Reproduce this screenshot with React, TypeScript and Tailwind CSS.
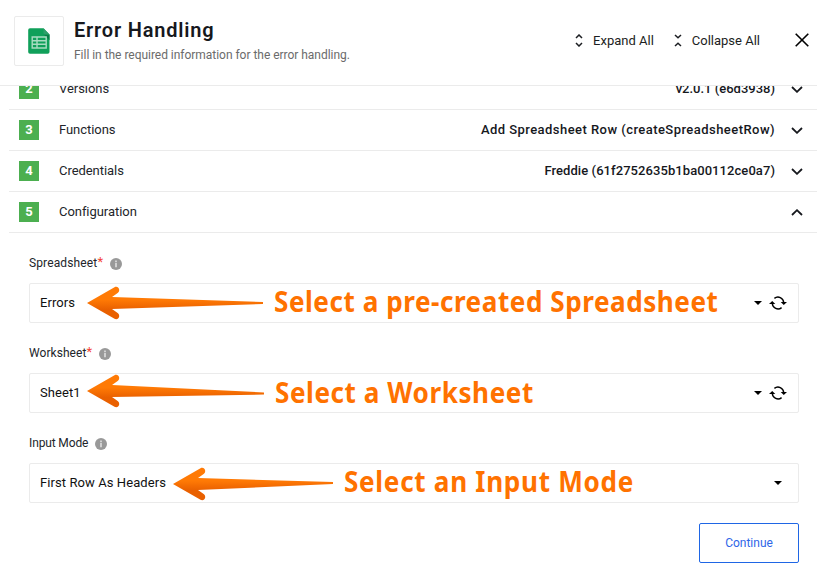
import type { ReactNode } from 'react';

const Chevron = ({ up = false }: { up?: boolean }) => (
  <svg className="h-[7px] w-3" viewBox="0 0 12 7" fill="none" stroke="#16181d" strokeWidth="1.8">
    <path d={up ? 'M1 6l5-4.8L11 6' : 'M1 1l5 4.8L11 1'} />
  </svg>
);

const UpDown = ({ collapse = false }: { collapse?: boolean }) => (
  <svg className="-mt-px h-[13px] w-2" viewBox="0 0 8 13" fill="none" stroke="#1c1e22" strokeWidth="1.5">
    <path d={collapse ? 'M1 1l3 2.8L7 1M1 12l3-2.8L7 12' : 'M1 4l3-3 3 3M1 9l3 3 3-3'} />
  </svg>
);

const Info = () => (
  <svg className="h-3 w-3" viewBox="0 0 12 12">
    <circle cx="6" cy="6" r="6" fill="#999" />
    <path d="M5.3 2.6h1.4v1.3H5.3zM5.3 4.8h1.4v4.4H5.3z" fill="#e9e9e9" />
  </svg>
);

const Caret = () => (
  <svg className="h-1 w-2" viewBox="0 0 8 4">
    <path d="M0 0h8L4 4z" fill="#000" />
  </svg>
);

const Refresh = () => (
  <svg className="h-[14px] w-[18px]" viewBox="0 0 18 14" fill="none" stroke="#000" strokeWidth="1.4">
    <path d="M5.4 2.4A5.7 5.7 0 0 1 14.7 6.5M12.6 11.6A5.7 5.7 0 0 1 3.3 7.5" />
    <path d="M11.7 6h6.3l-3.2 3zM0 8h6.3L3.2 5z" fill="#000" stroke="none" />
  </svg>
);

const SheetsIcon = () => (
  <svg className="h-[26px] w-[22px]" viewBox="0 0 22 26">
    <path d="M2 .3h13.5l6 6.2V24a1.800 1.800 0 0 1-1.800 1.800H2A1.800 1.800 0 0 1 .2 24V2.100A1.800 1.800 0 0 1 2 .3z" fill="#10a05a" />
    <path d="M15.800 6.500h5.700V12.200z" fill="#0a7d46" />
    <path d="M15.500 .3l6 6.200H17a1.500 1.500 0 0 1-1.500-1.500z" fill="#2f9f6b" />
    <path d="M4.200 9h14v11h-14zM4.200 12.700h14M4.200 16.300h14M9 9v11" fill="none" stroke="#a9dcc2" strokeWidth="1.4" />
  </svg>
);

const Arrow = ({ id, length, tilt = 0 }: { id: string; length: number; tilt?: number }) => (
  <svg className="h-[34px] w-[180px]" viewBox="0 0 180 34">
    <defs>
      <linearGradient id={id} x1="0" y1="0" x2="0" y2="1">
        <stop offset="0.4" stopColor="#ff7a05" />
        <stop offset="0.7" stopColor="#e96000" />
      </linearGradient>
    </defs>
    <path
      d={`M0 17L27.500 1.200C31-.6 34 3.800 31 6.800L25 11L${length} ${16 + tilt}V${18 + tilt}L25 23L31 27.200C34 30.200 31 34.600 27.500 32.800Z`}
      fill={`url(#${id})`}
    />
  </svg>
);

type RowProps = { n: number; title: string; value?: string; open?: boolean; valueCls?: string };
const Row = ({ n, title, value, open, valueCls = '' }: RowProps) => (
  <div className="flex h-[41px] shrink-0 items-center border-b border-[#ebebeb] pr-[14px] pl-[10px]">
    <span className="flex h-5 w-5 items-center justify-center bg-[#4caf50] pb-px text-[13px] leading-5 font-bold text-white">
      {n}
    </span>
    <span className="ml-5 text-[13px] leading-5 tracking-[-0.05px] text-[#22252a]">{title}</span>
    <span className={`mr-4 ml-auto text-[13px] leading-5 font-medium text-[#16181d] ${valueCls}`}>{value}</span>
    <Chevron up={open} />
  </div>
);

type FieldProps = { label: string; required?: boolean; value: string; refresh?: boolean; labelCls: string; children: ReactNode };
const Field = ({ label, required, value, refresh, labelCls, children }: FieldProps) => (
  <div className="h-[90px]">
    <div className="flex h-5 items-center text-[12px] text-[#22252a]">
      <span className={labelCls}>{label}</span>
      {required && <span className="-mt-[3px] text-[13px] text-[#f44336]">*</span>}
      <span className="mt-px ml-[7px]"><Info /></span>
    </div>
    <div className="relative mt-[10px] flex h-10 items-center rounded-[2px] border border-[#ebebeb] pr-[11px] pl-[10px]">
      <span className="text-[13px] tracking-[0.08px] text-[#111]">{value}</span>
      <span className={`ml-auto flex items-center gap-[7px] ${refresh ? '' : 'pr-[5px]'}`}>
        <Caret />
        {refresh && <Refresh />}
      </span>
      {children}
    </div>
  </div>
);

const note = "absolute origin-left scale-x-90 whitespace-nowrap font-['Noto_Sans',sans-serif] text-[29px] leading-8 font-bold text-[#ff7200]";

export default function App() {
  return (
    <div className="flex h-[578px] w-[817px] flex-col overflow-hidden bg-white font-['Roboto',sans-serif]">
      <header className="flex h-[86px] shrink-0 border-b border-[#ebebeb] pt-4 pl-[14px]">
        <div className="flex h-[50px] w-[50px] items-center justify-center rounded-[2px] border border-[#ebebeb]">
          <SheetsIcon />
        </div>
        <div className="ml-[10px]">
          <h1 className="h-7 text-[20px] leading-7 font-semibold tracking-[0.8px] text-[#16181d]">Error Handling</h1>
          <p className="text-[12px] leading-[22px] tracking-[-0.03px] text-[#6b6b6b]">Fill in the required information for the error handling.</p>
        </div>
        <div className="mr-2 ml-auto flex h-[49px] items-center text-[13px] text-[#1c1e22]">
          <UpDown />
          <span className="ml-[10px]">Expand All</span>
          <span className="ml-5"><UpDown collapse /></span>
          <span className="ml-[10px]">Collapse All</span>
          <svg className="-mt-px ml-[35px] h-[14px] w-[14px]" viewBox="0 0 14 14" stroke="#000" strokeWidth="1.6">
            <path d="M.7.7l12.600 12.600M13.300.7L.7 13.300" />
          </svg>
        </div>
      </header>
      <main className="flex h-[492px] flex-col overflow-hidden">
        <section className="-mt-[17px] ml-[9px] flex flex-col">
          <Row n={2} title="Versions" value="v2.0.1 (e6d3938)" />
          <Row n={3} title="Functions" value="Add Spreadsheet Row (createSpreadsheetRow)" valueCls="tracking-[0.45px]" />
          <Row n={4} title="Credentials" value="Freddie (61f2752635b1ba00112ce0a7)" valueCls="tracking-[0.07px]" />
          <Row n={5} title="Configuration" open />
        </section>
        <form className="mt-5 mr-[18px] ml-[29px]">
          <Field label="Spreadsheet" required value="Errors" refresh labelCls="tracking-[0.13px]">
            <span className="absolute top-[2px] left-[57px]"><Arrow id="shade-a" length={176} /></span>
            <span className={`${note} top-px left-[244px] tracking-[0.6px]`}>Select a pre-created Spreadsheet</span>
          </Field>
          <Field label="Worksheet" required value="Sheet1" refresh labelCls="tracking-[0.05px]">
            <span className="absolute top-0 left-[57px]"><Arrow id="shade-b" length={177} tilt={2.5} /></span>
            <span className={`${note} top-[2px] left-[245px] tracking-[0.62px]`}>Select a Worksheet</span>
          </Field>
          <Field label="Input Mode" value="First Row As Headers" labelCls="tracking-[-0.13px]">
            <span className="absolute top-[3px] left-[143px]"><Arrow id="shade-c" length={160} tilt={-1} /></span>
            <span className={`${note} top-px left-[314px] tracking-[0.78px]`}>Select an Input Mode</span>
          </Field>
          <div className="flex justify-end">
            <button type="button" className="h-10 w-[100px] rounded-[2px] border border-[#1f66e5] text-[12px] text-[#2f66e8]">Continue</button>
          </div>
        </form>
      </main>
    </div>
  );
}
